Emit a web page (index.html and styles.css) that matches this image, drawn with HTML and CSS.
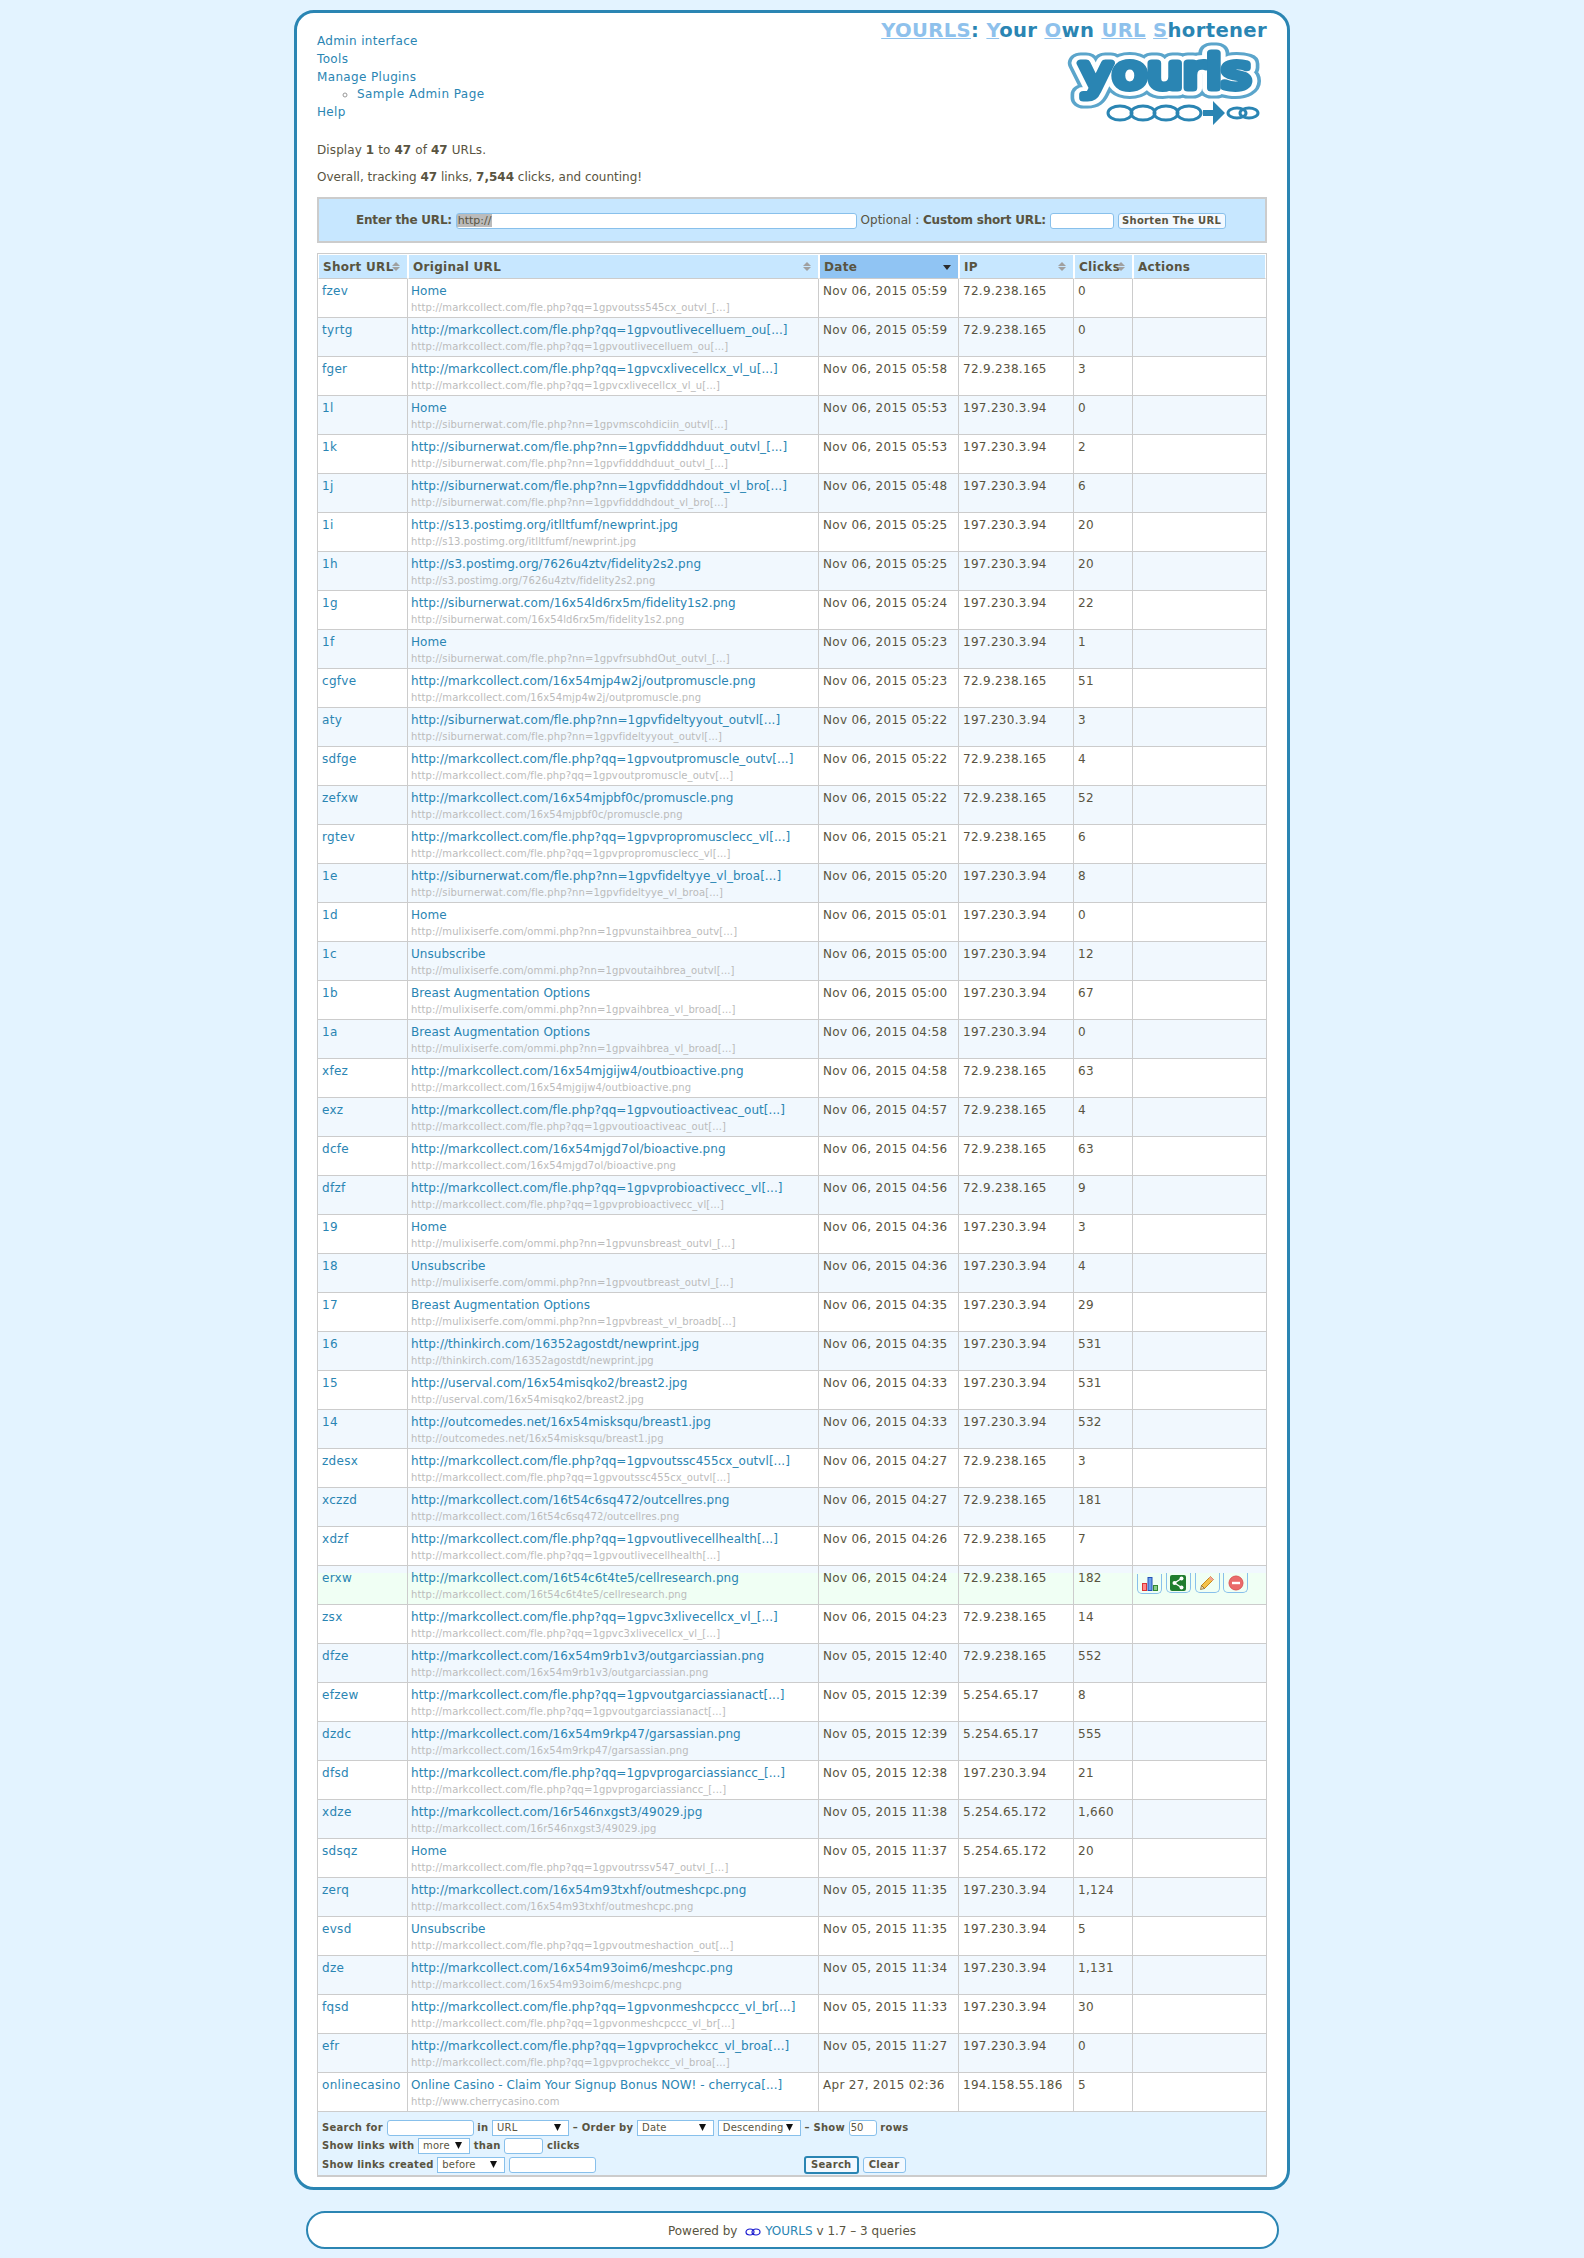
FILE: index.html
```html
<!DOCTYPE html>
<html>
	<head>
		<title>YOURLS: Your Own URL Shortener</title>
		<link rel="stylesheet" href="styles.css">
	</head>
	<body>
		<div id="wrap">
			<div class="top">
				<ul class="nav">
					<li><a href="#">Admin interface</a></li>
					<li><a href="#">Tools</a></li>
					<li><a href="#">Manage Plugins</a>
						<ul class="subnav"><li><a href="#">Sample Admin Page</a></li></ul>
					</li>
					<li><a href="#">Help</a></li>
				</ul>
				<div class="brand">
					<h1><a href="#"><u>YOURLS</u></a>: <a href="#"><u>Y</u></a>our <a href="#"><u>O</u></a>wn <a href="#"><u>URL</u></a> <a href="#"><u>S</u></a>hortener</h1>
					<svg class="logo" width="200" height="85" viewBox="0 0 200 85">
						<g class="logo-word">
							<text x="12" y="48" textLength="172" lengthAdjust="spacingAndGlyphs" class="halo-out">yourls</text>
							<text x="12" y="48" textLength="172" lengthAdjust="spacingAndGlyphs" class="halo-in">yourls</text>
							<text x="12" y="48" textLength="172" lengthAdjust="spacingAndGlyphs" class="tube">yourls</text>
						</g>
						<g class="chain">
							<ellipse cx="53" cy="73" rx="12" ry="7"/>
							<ellipse cx="76" cy="73" rx="12" ry="7"/>
							<ellipse cx="99" cy="73" rx="12" ry="7"/>
							<ellipse cx="122" cy="73" rx="12" ry="7"/>
							<ellipse cx="170" cy="73" rx="9" ry="5"/>
							<ellipse cx="182" cy="73" rx="9" ry="5"/>
						</g>
						<path class="arrow" d="M136 70h10v-9l12 12-12 12v-9h-10z"/>
					</svg>
				</div>
			</div>

			<p class="stat first">Display <b>1</b> to <b>47</b> of <b>47</b> URLs.</p>
			<p class="stat">Overall, tracking <b>47</b> links, <b>7,544</b> clicks, and counting!</p>

			<form class="new-url">
				<b>Enter the URL:</b>
				<input class="text url-input" type="text" value="http://">
				Optional : <b>Custom short URL:</b>
				<input class="text key-input" type="text">
				<input class="button" type="button" value="Shorten The URL">
			</form>

			<table class="main">
				<colgroup><col class="c1"><col class="c2"><col class="c3"><col class="c4"><col class="c5"><col class="c6"></colgroup>
				<thead>
					<tr>
						<th class="sort">Short URL</th>
						<th class="sort">Original URL</th>
						<th class="sorted">Date</th>
						<th class="sort">IP</th>
						<th class="sort">Clicks</th>
						<th>Actions</th>
					</tr>
				</thead>
				<tbody>
					<tr><td><a href="#">fzev</a></td><td><a href="#">Home</a><small>http://markcollect.com/fle.php?qq=1gpvoutss545cx_outvl_[...]</small></td><td>Nov 06, 2015 05:59</td><td>72.9.238.165</td><td>0</td><td></td></tr>
					<tr><td><a href="#">tyrtg</a></td><td><a href="#">http://markcollect.com/fle.php?qq=1gpvoutlivecelluem_ou[...]</a><small>http://markcollect.com/fle.php?qq=1gpvoutlivecelluem_ou[...]</small></td><td>Nov 06, 2015 05:59</td><td>72.9.238.165</td><td>0</td><td></td></tr>
					<tr><td><a href="#">fger</a></td><td><a href="#">http://markcollect.com/fle.php?qq=1gpvcxlivecellcx_vl_u[...]</a><small>http://markcollect.com/fle.php?qq=1gpvcxlivecellcx_vl_u[...]</small></td><td>Nov 06, 2015 05:58</td><td>72.9.238.165</td><td>3</td><td></td></tr>
					<tr><td><a href="#">1l</a></td><td><a href="#">Home</a><small>http://siburnerwat.com/fle.php?nn=1gpvmscohdiciin_outvl[...]</small></td><td>Nov 06, 2015 05:53</td><td>197.230.3.94</td><td>0</td><td></td></tr>
					<tr><td><a href="#">1k</a></td><td><a href="#">http://siburnerwat.com/fle.php?nn=1gpvfidddhduut_outvl_[...]</a><small>http://siburnerwat.com/fle.php?nn=1gpvfidddhduut_outvl_[...]</small></td><td>Nov 06, 2015 05:53</td><td>197.230.3.94</td><td>2</td><td></td></tr>
					<tr><td><a href="#">1j</a></td><td><a href="#">http://siburnerwat.com/fle.php?nn=1gpvfidddhdout_vl_bro[...]</a><small>http://siburnerwat.com/fle.php?nn=1gpvfidddhdout_vl_bro[...]</small></td><td>Nov 06, 2015 05:48</td><td>197.230.3.94</td><td>6</td><td></td></tr>
					<tr><td><a href="#">1i</a></td><td><a href="#">http://s13.postimg.org/itlltfumf/newprint.jpg</a><small>http://s13.postimg.org/itlltfumf/newprint.jpg</small></td><td>Nov 06, 2015 05:25</td><td>197.230.3.94</td><td>20</td><td></td></tr>
					<tr><td><a href="#">1h</a></td><td><a href="#">http://s3.postimg.org/7626u4ztv/fidelity2s2.png</a><small>http://s3.postimg.org/7626u4ztv/fidelity2s2.png</small></td><td>Nov 06, 2015 05:25</td><td>197.230.3.94</td><td>20</td><td></td></tr>
					<tr><td><a href="#">1g</a></td><td><a href="#">http://siburnerwat.com/16x54ld6rx5m/fidelity1s2.png</a><small>http://siburnerwat.com/16x54ld6rx5m/fidelity1s2.png</small></td><td>Nov 06, 2015 05:24</td><td>197.230.3.94</td><td>22</td><td></td></tr>
					<tr><td><a href="#">1f</a></td><td><a href="#">Home</a><small>http://siburnerwat.com/fle.php?nn=1gpvfrsubhdOut_outvl_[...]</small></td><td>Nov 06, 2015 05:23</td><td>197.230.3.94</td><td>1</td><td></td></tr>
					<tr><td><a href="#">cgfve</a></td><td><a href="#">http://markcollect.com/16x54mjp4w2j/outpromuscle.png</a><small>http://markcollect.com/16x54mjp4w2j/outpromuscle.png</small></td><td>Nov 06, 2015 05:23</td><td>72.9.238.165</td><td>51</td><td></td></tr>
					<tr><td><a href="#">aty</a></td><td><a href="#">http://siburnerwat.com/fle.php?nn=1gpvfideltyyout_outvl[...]</a><small>http://siburnerwat.com/fle.php?nn=1gpvfideltyyout_outvl[...]</small></td><td>Nov 06, 2015 05:22</td><td>197.230.3.94</td><td>3</td><td></td></tr>
					<tr><td><a href="#">sdfge</a></td><td><a href="#">http://markcollect.com/fle.php?qq=1gpvoutpromuscle_outv[...]</a><small>http://markcollect.com/fle.php?qq=1gpvoutpromuscle_outv[...]</small></td><td>Nov 06, 2015 05:22</td><td>72.9.238.165</td><td>4</td><td></td></tr>
					<tr><td><a href="#">zefxw</a></td><td><a href="#">http://markcollect.com/16x54mjpbf0c/promuscle.png</a><small>http://markcollect.com/16x54mjpbf0c/promuscle.png</small></td><td>Nov 06, 2015 05:22</td><td>72.9.238.165</td><td>52</td><td></td></tr>
					<tr><td><a href="#">rgtev</a></td><td><a href="#">http://markcollect.com/fle.php?qq=1gpvpropromusclecc_vl[...]</a><small>http://markcollect.com/fle.php?qq=1gpvpropromusclecc_vl[...]</small></td><td>Nov 06, 2015 05:21</td><td>72.9.238.165</td><td>6</td><td></td></tr>
					<tr><td><a href="#">1e</a></td><td><a href="#">http://siburnerwat.com/fle.php?nn=1gpvfideltyye_vl_broa[...]</a><small>http://siburnerwat.com/fle.php?nn=1gpvfideltyye_vl_broa[...]</small></td><td>Nov 06, 2015 05:20</td><td>197.230.3.94</td><td>8</td><td></td></tr>
					<tr><td><a href="#">1d</a></td><td><a href="#">Home</a><small>http://mulixiserfe.com/ommi.php?nn=1gpvunstaihbrea_outv[...]</small></td><td>Nov 06, 2015 05:01</td><td>197.230.3.94</td><td>0</td><td></td></tr>
					<tr><td><a href="#">1c</a></td><td><a href="#">Unsubscribe</a><small>http://mulixiserfe.com/ommi.php?nn=1gpvoutaihbrea_outvl[...]</small></td><td>Nov 06, 2015 05:00</td><td>197.230.3.94</td><td>12</td><td></td></tr>
					<tr><td><a href="#">1b</a></td><td><a href="#">Breast Augmentation Options</a><small>http://mulixiserfe.com/ommi.php?nn=1gpvaihbrea_vl_broad[...]</small></td><td>Nov 06, 2015 05:00</td><td>197.230.3.94</td><td>67</td><td></td></tr>
					<tr><td><a href="#">1a</a></td><td><a href="#">Breast Augmentation Options</a><small>http://mulixiserfe.com/ommi.php?nn=1gpvaihbrea_vl_broad[...]</small></td><td>Nov 06, 2015 04:58</td><td>197.230.3.94</td><td>0</td><td></td></tr>
					<tr><td><a href="#">xfez</a></td><td><a href="#">http://markcollect.com/16x54mjgijw4/outbioactive.png</a><small>http://markcollect.com/16x54mjgijw4/outbioactive.png</small></td><td>Nov 06, 2015 04:58</td><td>72.9.238.165</td><td>63</td><td></td></tr>
					<tr><td><a href="#">exz</a></td><td><a href="#">http://markcollect.com/fle.php?qq=1gpvoutioactiveac_out[...]</a><small>http://markcollect.com/fle.php?qq=1gpvoutioactiveac_out[...]</small></td><td>Nov 06, 2015 04:57</td><td>72.9.238.165</td><td>4</td><td></td></tr>
					<tr><td><a href="#">dcfe</a></td><td><a href="#">http://markcollect.com/16x54mjgd7ol/bioactive.png</a><small>http://markcollect.com/16x54mjgd7ol/bioactive.png</small></td><td>Nov 06, 2015 04:56</td><td>72.9.238.165</td><td>63</td><td></td></tr>
					<tr><td><a href="#">dfzf</a></td><td><a href="#">http://markcollect.com/fle.php?qq=1gpvprobioactivecc_vl[...]</a><small>http://markcollect.com/fle.php?qq=1gpvprobioactivecc_vl[...]</small></td><td>Nov 06, 2015 04:56</td><td>72.9.238.165</td><td>9</td><td></td></tr>
					<tr><td><a href="#">19</a></td><td><a href="#">Home</a><small>http://mulixiserfe.com/ommi.php?nn=1gpvunsbreast_outvl_[...]</small></td><td>Nov 06, 2015 04:36</td><td>197.230.3.94</td><td>3</td><td></td></tr>
					<tr><td><a href="#">18</a></td><td><a href="#">Unsubscribe</a><small>http://mulixiserfe.com/ommi.php?nn=1gpvoutbreast_outvl_[...]</small></td><td>Nov 06, 2015 04:36</td><td>197.230.3.94</td><td>4</td><td></td></tr>
					<tr><td><a href="#">17</a></td><td><a href="#">Breast Augmentation Options</a><small>http://mulixiserfe.com/ommi.php?nn=1gpvbreast_vl_broadb[...]</small></td><td>Nov 06, 2015 04:35</td><td>197.230.3.94</td><td>29</td><td></td></tr>
					<tr><td><a href="#">16</a></td><td><a href="#">http://thinkirch.com/16352agostdt/newprint.jpg</a><small>http://thinkirch.com/16352agostdt/newprint.jpg</small></td><td>Nov 06, 2015 04:35</td><td>197.230.3.94</td><td>531</td><td></td></tr>
					<tr><td><a href="#">15</a></td><td><a href="#">http://userval.com/16x54misqko2/breast2.jpg</a><small>http://userval.com/16x54misqko2/breast2.jpg</small></td><td>Nov 06, 2015 04:33</td><td>197.230.3.94</td><td>531</td><td></td></tr>
					<tr><td><a href="#">14</a></td><td><a href="#">http://outcomedes.net/16x54misksqu/breast1.jpg</a><small>http://outcomedes.net/16x54misksqu/breast1.jpg</small></td><td>Nov 06, 2015 04:33</td><td>197.230.3.94</td><td>532</td><td></td></tr>
					<tr><td><a href="#">zdesx</a></td><td><a href="#">http://markcollect.com/fle.php?qq=1gpvoutssc455cx_outvl[...]</a><small>http://markcollect.com/fle.php?qq=1gpvoutssc455cx_outvl[...]</small></td><td>Nov 06, 2015 04:27</td><td>72.9.238.165</td><td>3</td><td></td></tr>
					<tr><td><a href="#">xczzd</a></td><td><a href="#">http://markcollect.com/16t54c6sq472/outcellres.png</a><small>http://markcollect.com/16t54c6sq472/outcellres.png</small></td><td>Nov 06, 2015 04:27</td><td>72.9.238.165</td><td>181</td><td></td></tr>
					<tr><td><a href="#">xdzf</a></td><td><a href="#">http://markcollect.com/fle.php?qq=1gpvoutlivecellhealth[...]</a><small>http://markcollect.com/fle.php?qq=1gpvoutlivecellhealth[...]</small></td><td>Nov 06, 2015 04:26</td><td>72.9.238.165</td><td>7</td><td></td></tr>
					<tr class="hl"><td><a href="#">erxw</a></td><td><a href="#">http://markcollect.com/16t54c6t4te5/cellresearch.png</a><small>http://markcollect.com/16t54c6t4te5/cellresearch.png</small></td><td>Nov 06, 2015 04:24</td><td>72.9.238.165</td><td>182</td><td class="actions">
						<a class="act" href="#"><svg width="16" height="14" viewBox="0 0 16 14"><rect x="0.5" y="6.5" width="4" height="7" fill="#f88" stroke="#d33"/><rect x="6" y="0.5" width="4" height="13" fill="#6b9fe8" stroke="#2250b8"/><rect x="11.5" y="8.5" width="4" height="5" fill="#8c8" stroke="#383"/></svg></a>
						<a class="act" href="#"><svg width="16" height="16" viewBox="0 0 16 16"><rect width="16" height="16" rx="2" fill="#1f7d2e"/><path d="M11.500 3.500 4.500 8l7 4.500" fill="none" stroke="#fff" stroke-width="1.300"/><circle cx="11.500" cy="3.500" r="2" fill="#fff"/><circle cx="4.500" cy="8" r="2" fill="#fff"/><circle cx="11.500" cy="12.500" r="2" fill="#fff"/></svg></a>
						<a class="act" href="#"><svg width="16" height="16" viewBox="0 0 16 16"><path d="M11.500 1.500l3 3-9 9-3-3z" fill="#f4c24a" stroke="#c98a1a"/><path d="M2.500 10.500l3 3-4 1z" fill="#f3dcb0" stroke="#7a5a20" stroke-width=".7"/><path d="M11.500 1.500l3 3-1.500 1.500-3-3z" fill="#f2a0a0"/></svg></a>
						<a class="act" href="#"><svg width="16" height="16" viewBox="0 0 16 16"><circle cx="8" cy="8" r="7" fill="#ea6b6b" stroke="#d55"/><rect x="4" y="6.800" width="8" height="2.400" fill="#fff"/></svg></a>
					</td></tr>
					<tr><td><a href="#">zsx</a></td><td><a href="#">http://markcollect.com/fle.php?qq=1gpvc3xlivecellcx_vl_[...]</a><small>http://markcollect.com/fle.php?qq=1gpvc3xlivecellcx_vl_[...]</small></td><td>Nov 06, 2015 04:23</td><td>72.9.238.165</td><td>14</td><td></td></tr>
					<tr><td><a href="#">dfze</a></td><td><a href="#">http://markcollect.com/16x54m9rb1v3/outgarciassian.png</a><small>http://markcollect.com/16x54m9rb1v3/outgarciassian.png</small></td><td>Nov 05, 2015 12:40</td><td>72.9.238.165</td><td>552</td><td></td></tr>
					<tr><td><a href="#">efzew</a></td><td><a href="#">http://markcollect.com/fle.php?qq=1gpvoutgarciassianact[...]</a><small>http://markcollect.com/fle.php?qq=1gpvoutgarciassianact[...]</small></td><td>Nov 05, 2015 12:39</td><td>5.254.65.17</td><td>8</td><td></td></tr>
					<tr><td><a href="#">dzdc</a></td><td><a href="#">http://markcollect.com/16x54m9rkp47/garsassian.png</a><small>http://markcollect.com/16x54m9rkp47/garsassian.png</small></td><td>Nov 05, 2015 12:39</td><td>5.254.65.17</td><td>555</td><td></td></tr>
					<tr><td><a href="#">dfsd</a></td><td><a href="#">http://markcollect.com/fle.php?qq=1gpvprogarciassiancc_[...]</a><small>http://markcollect.com/fle.php?qq=1gpvprogarciassiancc_[...]</small></td><td>Nov 05, 2015 12:38</td><td>197.230.3.94</td><td>21</td><td></td></tr>
					<tr><td><a href="#">xdze</a></td><td><a href="#">http://markcollect.com/16r546nxgst3/49029.jpg</a><small>http://markcollect.com/16r546nxgst3/49029.jpg</small></td><td>Nov 05, 2015 11:38</td><td>5.254.65.172</td><td>1,660</td><td></td></tr>
					<tr><td><a href="#">sdsqz</a></td><td><a href="#">Home</a><small>http://markcollect.com/fle.php?qq=1gpvoutrssv547_outvl_[...]</small></td><td>Nov 05, 2015 11:37</td><td>5.254.65.172</td><td>20</td><td></td></tr>
					<tr><td><a href="#">zerq</a></td><td><a href="#">http://markcollect.com/16x54m93txhf/outmeshcpc.png</a><small>http://markcollect.com/16x54m93txhf/outmeshcpc.png</small></td><td>Nov 05, 2015 11:35</td><td>197.230.3.94</td><td>1,124</td><td></td></tr>
					<tr><td><a href="#">evsd</a></td><td><a href="#">Unsubscribe</a><small>http://markcollect.com/fle.php?qq=1gpvoutmeshaction_out[...]</small></td><td>Nov 05, 2015 11:35</td><td>197.230.3.94</td><td>5</td><td></td></tr>
					<tr><td><a href="#">dze</a></td><td><a href="#">http://markcollect.com/16x54m93oim6/meshcpc.png</a><small>http://markcollect.com/16x54m93oim6/meshcpc.png</small></td><td>Nov 05, 2015 11:34</td><td>197.230.3.94</td><td>1,131</td><td></td></tr>
					<tr><td><a href="#">fqsd</a></td><td><a href="#">http://markcollect.com/fle.php?qq=1gpvonmeshcpccc_vl_br[...]</a><small>http://markcollect.com/fle.php?qq=1gpvonmeshcpccc_vl_br[...]</small></td><td>Nov 05, 2015 11:33</td><td>197.230.3.94</td><td>30</td><td></td></tr>
					<tr><td><a href="#">efr</a></td><td><a href="#">http://markcollect.com/fle.php?qq=1gpvprochekcc_vl_broa[...]</a><small>http://markcollect.com/fle.php?qq=1gpvprochekcc_vl_broa[...]</small></td><td>Nov 05, 2015 11:27</td><td>197.230.3.94</td><td>0</td><td></td></tr>
					<tr><td><a href="#">onlinecasino</a></td><td><a href="#">Online Casino - Claim Your Signup Bonus NOW! - cherryca[...]</a><small>http://www.cherrycasino.com</small></td><td>Apr 27, 2015 02:36</td><td>194.158.55.186</td><td>5</td><td></td></tr>
				</tbody>
				<tfoot>
					<tr>
						<th colspan="6">
							<div class="filter">
								Search for <input class="text s-search" type="text">
								in <select class="sel s-in"><option>URL</option></select>
								– Order by <select class="sel s-order"><option>Date</option></select>
								<select class="sel s-dir"><option>Descending</option></select>
								– Show <input class="text s-rows" type="text" value="50"> rows
							</div>
							<div class="filter">
								Show links with <select class="sel s-more"><option>more</option></select>
								than <input class="text s-clicks" type="text"> clicks
							</div>
							<div class="filter">
								Show links created <select class="sel s-before"><option>before</option></select>
								<input class="text s-date" type="text">
								<span class="filter-btns">
									<input class="button primary" type="button" value="Search">
									<input class="button clear" type="button" value="Clear">
								</span>
							</div>
						</th>
					</tr>
				</tfoot>
			</table>
		</div>

		<div id="footer">
			Powered by
			<svg class="mini" width="16" height="8" viewBox="0 0 16 8"><g fill="none" stroke="#1a1ad0" stroke-width="1.200"><ellipse cx="5" cy="4" rx="4" ry="3"/><ellipse cx="11" cy="4" rx="4" ry="3"/></g></svg>
			<a href="#">YOURLS</a> v 1.7 – 3 queries
		</div>
	</body>
</html>
```
FILE: styles.css
```css
* {
	box-sizing: border-box;
}
body {
	margin: 0;
	background: #e3f3ff;
	color: #595441;
	font-family: "DejaVu Sans", Verdana, sans-serif;
	font-size: 12px;
	letter-spacing: .3px;
	font-variant-ligatures: none;
}
a {
	color: #2a85b3;
	text-decoration: none;
}

#wrap {
	width: 996px;
	height: 2180px;
	margin: 10px auto 0;
	padding: 0 20px;
	background: #fff;
	border: 3px solid #2a85b3;
	border-radius: 20px;
}

.top {
	display: flex;
	justify-content: space-between;
	height: 128px;
}
.nav {
	list-style: none;
	margin: 0;
	padding: 19px 0 0;
	line-height: 18px;
	letter-spacing: .35px;
}
.subnav {
	list-style: circle;
	margin: 0;
	padding: 0 0 0 40px;
	color: #999;
	line-height: 17px;
	letter-spacing: .45px;
}
.brand {
	text-align: right;
}
h1 {
	margin: 6px 0 0;
	font-size: 19.6px;
	line-height: 24px;
	letter-spacing: .35px;
	color: #2a85b3;
}
h1 a,
h1 u {
	color: #8ec1ec;
}
.logo {
	display: block;
	margin: -3px 0 0 auto;
}
.logo-word text {
	font-family: "DejaVu Sans", sans-serif;
	font-size: 46px;
	letter-spacing: 0;
	stroke-linejoin: round;
}
.halo-out {
	stroke: #5ba5cb;
	stroke-width: 21px;
	fill: #5ba5cb;
}
.halo-in {
	stroke: #fff;
	stroke-width: 15px;
	fill: #fff;
}
.tube {
	stroke: #2a85b3;
	stroke-width: 7px;
	fill: #2a85b3;
}
.chain ellipse {
	fill: none;
	stroke: #2a85b3;
	stroke-width: 3px;
}
.arrow {
	fill: #2a85b3;
}

.stat {
	margin: 0;
	line-height: 18px;
	height: 27px;
	letter-spacing: 0;
}
.stat.first {
	letter-spacing: .1px;
}

.new-url {
	height: 46px;
	margin: 2px 0 10px;
	padding: 0 0 0 37px;
	background: #c7e7ff;
	border: 2px solid #ccc;
	line-height: 42px;
	white-space: nowrap;
	letter-spacing: 0;
}
.new-url b {
	letter-spacing: -.2px;
}
.text {
	height: 16px;
	padding: 0 1px;
	vertical-align: middle;
	border: 1px solid #88c0eb;
	border-radius: 3px;
	background: #fff;
	color: #595441;
	font: 11px "DejaVu Sans", sans-serif;
	outline: 0;
}
.url-input {
	width: 401px;
	background: linear-gradient(#bbb, #bbb) no-repeat 0 center / 35px 13px #fff;
}
.key-input {
	width: 64px;
}
.button {
	width: 108px;
	height: 16px;
	padding: 0;
	vertical-align: middle;
	border: 1px solid #88c0eb;
	border-radius: 3px;
	background: #f3f9ff;
	color: #595441;
	font: bold 10px "DejaVu Sans", sans-serif;
	letter-spacing: .3px;
}

table.main {
	width: 950px;
	table-layout: fixed;
	border-collapse: separate;
	border-spacing: 0;
	border-top: 1px solid #ccc;
	border-left: 1px solid #ccc;
	border-right: 1px solid #ccc;
}
.c1 { width: 90px; }
.c2 { width: 411px; }
.c3 { width: 140px; }
.c4 { width: 115px; }
.c5 { width: 59px; }

thead th {
	position: relative;
	height: 25px;
	padding: 1px 0 0 4px;
	background: #c7e7ff;
	border: 1px solid #fff;
	border-bottom-color: #ccc;
	text-align: left;
	font-size: 12px;
	letter-spacing: .3px;
}
th.sorted {
	background: #90c4f3;
}
th.sort::before,
th.sort::after,
th.sorted::after {
	content: "";
	position: absolute;
	right: 7px;
	border: 4px solid transparent;
}
th.sort::before {
	top: 7px;
	border-top: 0;
	border-bottom: 4px solid #a0a0a0;
}
th.sort::after {
	top: 12px;
	border-bottom: 0;
	border-top: 4px solid #a0a0a0;
}
th.sorted::after {
	top: 10px;
	border-bottom: 0;
	border-top: 5px solid #2b2b2b;
}

tbody td {
	height: 39px;
	padding: 5px 4px 0;
	vertical-align: top;
	line-height: 15px;
	border-right: 1px solid #ccc;
	border-bottom: 1px solid #ccc;
	overflow: hidden;
	white-space: nowrap;
}
tbody td:nth-child(2) {
	padding-left: 3px;
	letter-spacing: .05px;
}
tbody td:last-child {
	border-right: 0;
}
tbody tr:nth-child(even) td {
	background: #f1f8fe;
}
tbody tr.hl td {
	background: linear-gradient(#f1f8fe 7px, #f0fff4 7px);
}
tbody small {
	display: block;
	margin-top: 2px;
	font-size: 10px;
	line-height: 14px;
	color: #bbb;
	letter-spacing: .1px;
}
tbody td.actions {
	padding: 7px 0 0 4px;
	line-height: 0;
	letter-spacing: 0;
}
.act {
	display: inline-flex;
	align-items: center;
	justify-content: center;
	width: 25px;
	height: 20px;
	border: 1px solid #88c0eb;
	border-top: 0;
	border-radius: 0 0 5px 5px;
}

tfoot th {
	height: 65px;
	padding: 6px 0 0 4px;
	background: #e3f3ff;
	border-bottom: 2px solid #ccc;
	text-align: left;
	font-size: 10px;
	letter-spacing: .25px;
}
.filter {
	height: 18px;
	line-height: 16px;
	white-space: nowrap;
}
.sel {
	height: 16px;
	padding: 0 0 0 4px;
	vertical-align: middle;
	border: 1px solid #88c0eb;
	border-radius: 0;
	background: #fff url("data:image/svg+xml,%3Csvg xmlns='http://www.w3.org/2000/svg' width='7' height='7'%3E%3Cpath d='M0 0h7L3.500 7z' fill='%23111'/%3E%3C/svg%3E") no-repeat right 7px center;
	color: #595441;
	font: 10px "DejaVu Sans", sans-serif;
	letter-spacing: .2px;
	appearance: none;
	-webkit-appearance: none;
}
.s-search { width: 87px; }
.s-in { width: 77px; }
.s-order { width: 77px; }
.s-dir { width: 83px; }
.s-rows { width: 28px; font-size: 10px; }
.s-more { width: 52px; }
.s-clicks { width: 39px; }
.s-before { width: 68px; }
.s-date { width: 87px; }
.filter-btns {
	margin-left: 204px;
}
.filter-btns .clear {
	width: 43px;
}
.filter-btns .primary {
	width: 55px;
	height: 18px;
	border: 2px solid #2a85b3;
}

#footer {
	width: 973px;
	height: 38px;
	margin: 21px auto 0;
	padding-top: 11px;
	background: #fff;
	border: 2px solid #2a85b3;
	border-radius: 25px;
	text-align: center;
	line-height: 15px;
	letter-spacing: 0;
}
.mini {
	margin: 0 0 0 4px;
	vertical-align: -1px;
}
```
